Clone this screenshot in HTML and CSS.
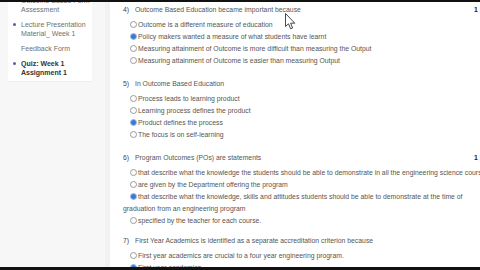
FILE: index.html
```html
<!DOCTYPE html>
<html>
<head>
<meta charset="utf-8">
<link rel="stylesheet" href="styles.css">
</head>
<body>
<div class="page">
  <div class="bar-top"></div>
  <div class="body">
    <aside class="sidebar">
      <div class="card">
        <div class="item"><span class="dot none"></span><span>Outcome Based Form<br>Assessment</span></div>
        <div class="item"><span class="dot"></span><span>Lecture Presentation<br>Material_ Week 1</span></div>
        <div class="item"><span class="dot none"></span><span>Feedback Form</span></div>
        <div class="item active"><span class="dot"></span><span>Quiz: Week 1<br>Assignment 1</span></div>
      </div>
    </aside>
    <main class="main">
      <section class="q">
        <div class="q-head"><span class="num">4)</span><span>Outcome Based Education became important because</span><span class="pts">1 point</span></div>
        <div class="opt"><span class="radio"></span>Outcome is a different measure of education</div>
        <div class="opt"><span class="radio on"></span>Policy makers wanted a measure of what students have learnt</div>
        <div class="opt"><span class="radio"></span>Measuring attainment of Outcome is more difficult than measuring the Output</div>
        <div class="opt"><span class="radio"></span>Measuring attainment of Outcome is easier than measuring Output</div>
      </section>
      <section class="q">
        <div class="q-head"><span class="num">5)</span><span>In Outcome Based Education</span><span class="pts"></span></div>
        <div class="opt"><span class="radio"></span>Process leads to learning product</div>
        <div class="opt"><span class="radio"></span>Learning process defines the product</div>
        <div class="opt"><span class="radio on"></span>Product defines the process</div>
        <div class="opt"><span class="radio"></span>The focus is on self-learning</div>
      </section>
      <section class="q">
        <div class="q-head"><span class="num">6)</span><span>Program Outcomes (POs) are statements</span><span class="pts">1 point</span></div>
        <div class="opt"><span class="radio"></span>that describe what the knowledge the students should be able to demonstrate in all the engineering science courses</div>
        <div class="opt"><span class="radio"></span>are given by the Department offering the program</div>
        <div class="opt"><span class="radio on"></span>that describe what the knowledge, skills and attitudes students should be able to demonstrate at the time of<br>graduation from an engineering program</div>
        <div class="opt"><span class="radio"></span>specified by the teacher for each course.</div>
      </section>
      <section class="q q7">
        <div class="q-head"><span class="num">7)</span><span>First Year Academics is identified as a separate accreditation criterion because</span><span class="pts"></span></div>
        <div class="opt"><span class="radio"></span>First year academics are crucial to a four year engineering program.</div>
        <div class="opt"><span class="radio on"></span>First year academics</div>
      </section>
      <svg class="cursor" width="11" height="17" viewBox="0 0 11 17"><path d="M0.5 0.5 L0.5 13.5 L3.5 10.8 L5.6 15.8 L7.6 15 L5.6 10.2 L9.8 10.2 Z" fill="#fff" stroke="#333" stroke-width="0.9" stroke-linejoin="round"/></svg>
    </main>
  </div>
  <div class="bar-bottom"></div>
</div>
</body>
</html>
```

FILE: styles.css
```css
html, body {
  margin: 0;
  padding: 0;
}
body {
  width: 480px;
  height: 270px;
  overflow: hidden;
  font-family: "Liberation Sans", Arial, sans-serif;
  background: #fff;
}
.page {
  display: flex;
  flex-direction: column;
  width: 480px;
  height: 270px;
}
.bar-top {
  height: 2px;
  background: #111;
  flex: none;
}
.bar-bottom {
  height: 3px;
  background: #111;
  flex: none;
}
.body {
  flex: 1;
  display: flex;
  min-height: 0;
  overflow: hidden;
}
.sidebar {
  width: 105px;
  flex: none;
  background: #f7f7f7;
  border-right: 5px solid #f2f2f2;
  overflow: hidden;
}
.card {
  margin-left: 8px;
  width: 80px;
  background: #fff;
  margin-top: -6px;
  padding: 0 0 4px 4px;
  display: flex;
  flex-direction: column;
  gap: 6px;
  box-shadow: 0 1px 1px rgba(0,0,0,0.04);
}
.item {
  display: flex;
  align-items: flex-start;
  font-size: 7px;
  line-height: 9px;
  color: #707070;
}
.item.active {
  color: #333;
  font-weight: bold;
}
.dot {
  width: 3px;
  height: 3px;
  border-radius: 50%;
  background: #5b5ba8;
  margin: 3px 5px 0 1px;
  flex: none;
}
.dot.none {
  background: transparent;
}
.main {
  flex: 1;
  position: relative;
  padding: 2px 0 0 13px;
  overflow: hidden;
  font-size: 6.85px;
  color: #555;
}
.q {
  margin-bottom: 11px;
}
.q7 {
  margin-top: -3px;
}
.q-head {
  display: grid;
  grid-template-columns: 12px 339px auto;
  line-height: 12px;
  margin-bottom: 3px;
  white-space: nowrap;
  color: #555;
}
.num {
  color: #444;
}
.pts {
  color: #222;
  font-weight: bold;
}
.opt {
  line-height: 12px;
  text-indent: 7px;
  white-space: nowrap;
  color: #555;
}
.radio {
  display: inline-block;
  width: 5px;
  height: 5px;
  border: 0.8px solid #9a9a9a;
  border-radius: 50%;
  background: #fff;
  margin-right: 1px;
  text-indent: 0;
  vertical-align: -0.5px;
}
.radio.on {
  background: #3a78d8;
  border-color: #9bbbe9;
}
.cursor {
  position: absolute;
  left: 175px;
  top: 11px;
}
```
